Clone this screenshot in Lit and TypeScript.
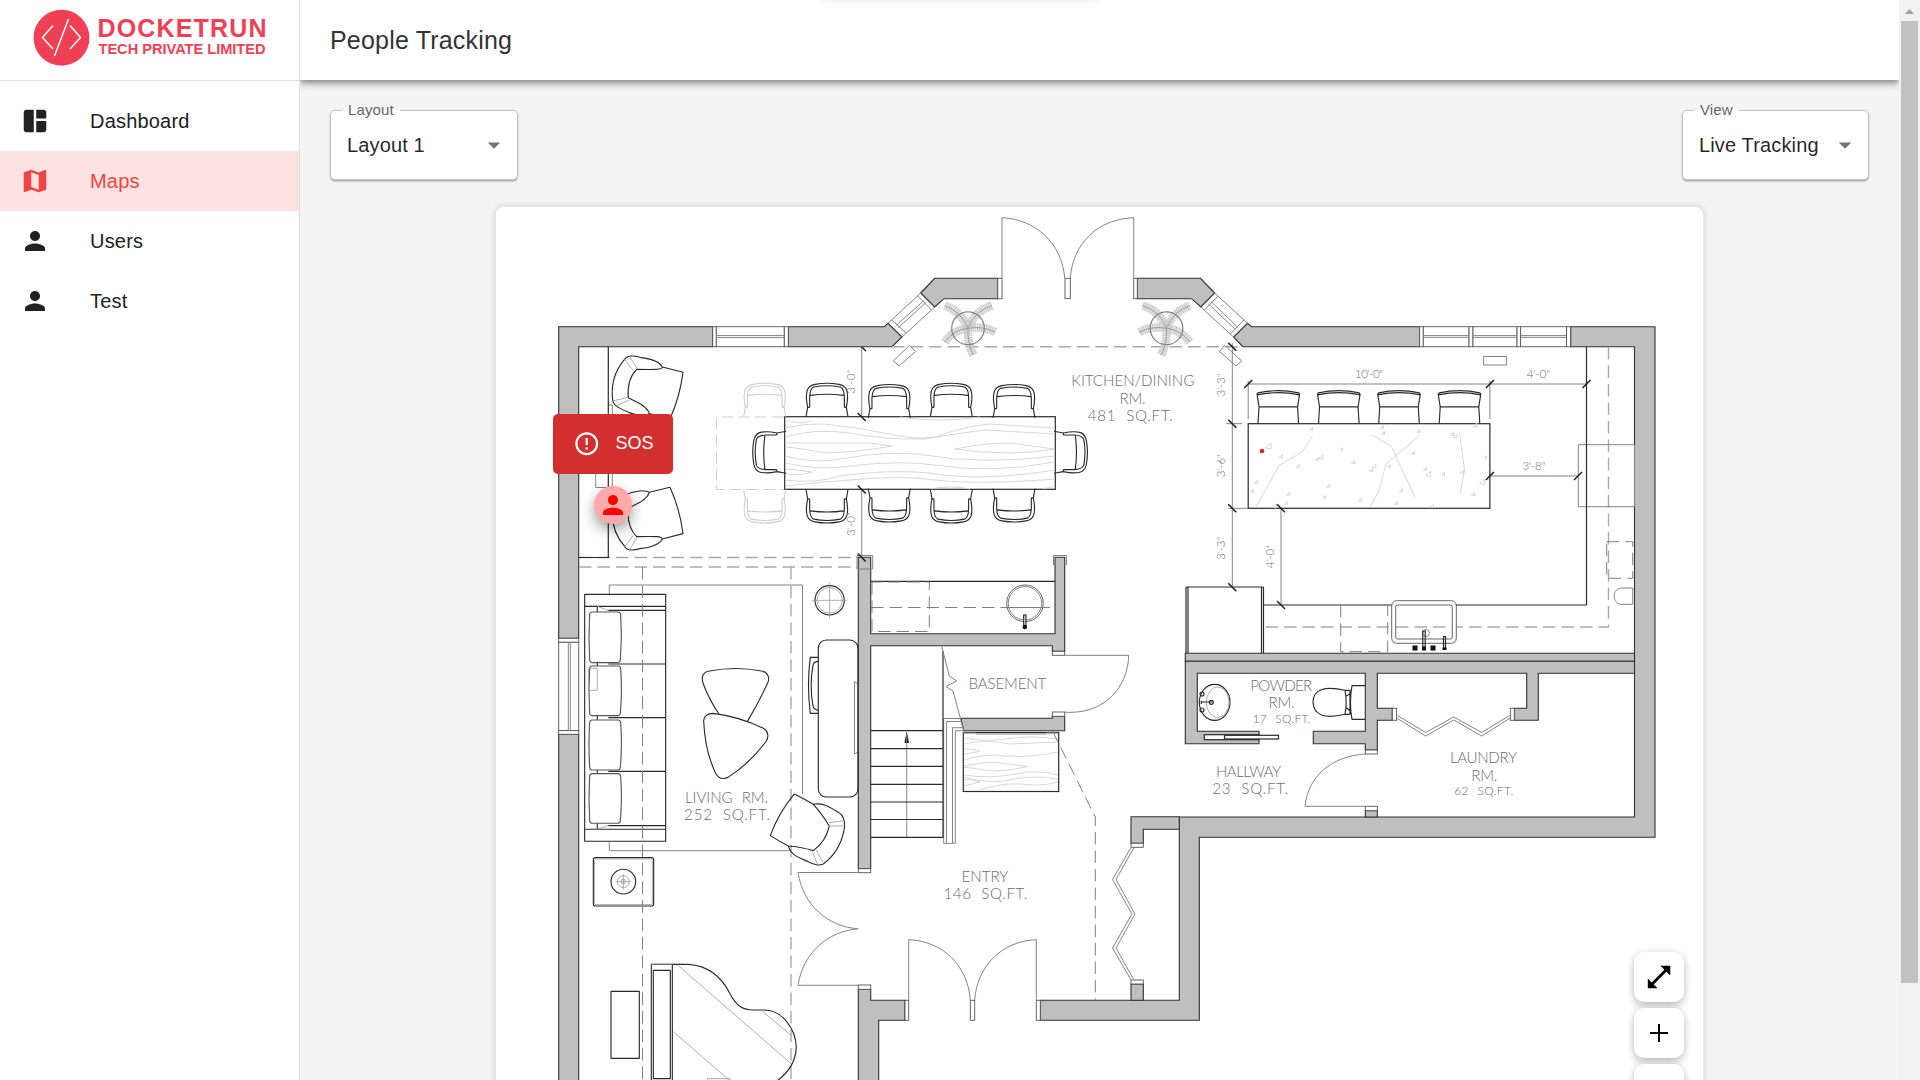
import { LitElement, html, svg, css } from "lit";
import { customElement, property } from "lit/decorators.js";

const ICONS = {
  dashboard:
    "M11 21H5c-1.1 0-2-.9-2-2V5c0-1.1.9-2 2-2h6v18zm2 0h6c1.1 0 2-.9 2-2v-7h-8v9zm8-11V5c0-1.1-.9-2-2-2h-6v7h8z",
  map: "m20.5 3-.16.03L15 5.1 9 3 3.36 4.9c-.21.07-.36.25-.36.48V20.5c0 .28.22.5.5.5l.16-.03L9 18.9l6 2.1 5.64-1.9c.21-.07.36-.25.36-.48V3.5c0-.28-.22-.5-.5-.5zM15 19l-6-2.11V5l6 2.11V19z",
  person:
    "M12 12c2.21 0 4-1.79 4-4s-1.79-4-4-4-4 1.79-4 4 1.79 4 4 4zm0 2c-2.67 0-8 1.34-8 4v2h16v-2c0-2.66-5.33-4-8-4z",
  error:
    "M11 15h2v2h-2zm0-8h2v6h-2zm.99-5C6.47 2 2 6.48 2 12s4.47 10 9.99 10C17.52 22 22 17.52 22 12S17.52 2 11.99 2zM12 20c-4.42 0-8-3.58-8-8s3.58-8 8-8 8 3.58 8 8-3.58 8-8 8z",
  drop: "M7 10l5 5 5-5z",
};

const icon = (name: keyof typeof ICONS) =>
  html`<svg class="icon" viewBox="0 0 24 24"><path d=${ICONS[name]} /></svg>`;

/* ---------- Floor plan data, in page units ---------- */

const WALLS = [
  "M712.7 326.7H558.7V638.3H578.7V346.7H712.7Z",
  "M558.7 734.3H578.7V1090H558.7Z",
  "M788.3 326.7H884.3L888 323.3 902 337 892 346.7H788.3Z",
  "M920.7 293L934.7 278.3H997.7V298.7H944L934.7 307Z",
  "M1137.3 278.3H1200.5L1214.7 293 1200.8 307 1191.7 298.7H1137.3Z",
  "M1251.6 326.7H1419.6V346.7H1242.8L1233.6 337 1247.5 323.3Z",
  "M1570.7 326.7H1655V837.3H1199.3V1020.3H1040.3V1000.3H1179.3V817H1634.5V346.7H1570.7Z",
  "M1185.3 653.3H1634.5V661.3H1185.3Z",
  "M1185.3 661.3H1634.5V673.3H1538.3V720.3H1514.3V708.3H1526.7V673.3H1377.3V708.3H1392.3V720.3H1377.3V750H1365.3V743.7H1313.3V731.3H1365.3V673.3H1197.3V731.3H1259V743.7H1185.3Z",
  "M1365.3 810.7H1377.3V817H1365.3Z",
  "M858.3 557.3H870.7V633.7H1055V557.3H1064.7V651.3H1052.3V645.7H870.7V868.7H858.3Z",
  "M961 718.3H1052.3V716.3H1064.7V730.7H963.7Z",
  "M858.3 989.3H870.7V1000.3H905V1020.3H878.7V1090H858.3Z",
  "M1131 816.7H1179.3V829.3H1143.3V843.3H1131Z",
  "M1131 984H1143.3V1000.3H1131Z",
];

const WHITE_BOXES: [number, number, number, number][] = [
  [712.7, 326.7, 3.6, 20], [716.3, 326.7, 68, 20], [784.3, 326.7, 4, 20],
  [997.7, 278.3, 4.3, 20.4], [1065, 278.3, 5.3, 20.4], [1133.7, 278.3, 3.6, 20.4],
  [1419.6, 326.7, 3.7, 20], [1423.3, 326.7, 45.7, 20], [1469, 326.7, 4, 20],
  [1473, 326.7, 44, 20], [1517, 326.7, 3.6, 20], [1520.6, 326.7, 46, 20], [1566.6, 326.7, 4, 20],
  [558.7, 638.3, 20, 4], [558.7, 642.3, 20, 88.3], [558.7, 730.6, 20, 3.7],
  [1052.3, 651.3, 12.4, 4], [1052.3, 712, 12.4, 4.3],
  [1365.3, 750, 12, 4], [1365.3, 806.3, 12, 4.4],
  [1392.3, 708.3, 4.3, 12], [1510.3, 708.3, 4, 12],
  [858.3, 868.7, 12.4, 4], [858.3, 985, 12.4, 4.3], [905, 1000.3, 3.7, 20],
  [970.3, 1000.3, 4.4, 20], [1036.3, 1000.3, 4, 20],
  [1131, 843.3, 12.3, 4], [1131, 980, 12.3, 4],
];

const THIN = [
  "M716 335.6H784M716 337.6H784M1423 335.6H1469M1423 337.4H1469M1473 335.6H1517M1473 337.4H1517M1521 335.6H1566M1521 337.4H1566",
  "M568.3 642.5V730.5M570.3 642.5V730.5",
  "M888 323.3L920.7 293M902 337L934.7 307M892 320L906 333M917.5 296L931.5 310M895.5 326L924.5 300M898 328L926.5 302",
  "M1214.7 293L1247.5 323.3M1200.8 307L1233.6 337M1218.2 296L1204.3 310M1244 320L1230.2 334M1211 301.5L1237.5 327M1208.5 304L1235 329",
  "M1002 278V217.7C1035 219 1062 243 1064.7 278M1070.3 278C1073 243 1098 219 1133.7 217.7V278",
  "M1064.7 655.3H1128.7C1128 687 1105 712.3 1071 712.3H1064.7",
  "M1365.3 754C1332 756 1308 776 1305 806.3H1365.3",
  "M858.3 872.5H798C803 905 828 927 858.3 928.8C828 931 803 953 798 985.3H858.3",
  "M908.7 1000V939.7C943 941 968 966 970.3 1000M974.7 1000C977 966 1002 941 1036.3 939.7V1000",
  "M1396.6 718L1425.7 736 1453.7 720 1481.7 736 1510.3 718M1397.5 715.5L1425.7 732.5 1453.7 717 1481.7 732.5 1509.5 715.5",
  "M1131 847.5L1112.5 879.5 1132 914 1112.5 948 1131 980M1134 847.5L1116 879.5 1135 914 1116 948 1134 980",
  "M893.3 361L909.5 345.3 915.5 351.5 899 366ZM1224.7 345.3L1219.5 351.5 1236 366 1241.7 361ZM1483.5 356.5H1506.5V365H1483.5Z",
  "M608 405H612.3V487.5H595.7V474",
  "M1578.3 444.7H1634.5V506.7H1578.3Z",
  "M1632.7 588H1622C1611.5 588 1611.5 604.3 1622 604.3H1632.7Z",
  "M609.3 594V585H802.5V794M609.3 842V850.7H790",
  "M854.5 681.5L858 684V752L854.5 754Z",
  "M857 555.5H872.7V569H857ZM1053.5 555.5H1066.5V565M1053.5 555.5V565",
  "M943.7 718.5H961M943.7 718.5V843.3H955.3V730.7H963M946.5 843V721.5H961M952.5 843V727.7H962",
  "M906.7 837V734",
];

const BOLD = [
  "M608.3 347V557.5H579",
  "M870.7 581.3H1055",
  "M870.7 730.7H943M870.7 748.7H943M870.7 766.3H943M870.7 784.3H943M870.7 802H943M870.7 819.5H943M870.7 837.3H943V651",
  "M1586.5 347V605H1456M1391.7 605H1264",
];

const DASHES = [
  "M892 346.7H1243", "M579 557.5H857M579 567H857",
  "M791 567V1080", "M1608.5 347V627H1264",
];
const THIN_DASHES = [
  "M642.5 567V1080", "M871 607.5H1055", "M872 582V631.5H929.3V582H872",
  "M1340.7 605V651.7H1387.7V605", "M1606.7 541.7H1632.7V578.3H1606.7Z",
  "M1052.5 731L1095.3 817V1000",
];

const DIM_LINES =
  "M861.7 347V417M861.7 489V558M1232.3 343V587M1226 423.7H1242M1228 508.3H1248M1281 508.3V605M1248.2 384H1586.5M1248.2 381V419M1489.9 381V419M1489.9 476H1578";
const BACK_TICKS = [[861.7, 417], [861.7, 489.5], [861.7, 557.5], [1232.3, 346.7], [1232.3, 423.7], [1232.3, 508.3], [1232.3, 587.3], [1281, 508.3], [1281, 605]];
const FORWARD_TICKS = [[1248.2, 384], [1489.9, 384], [1586.5, 384], [1489.9, 476], [1578, 476]];

interface Label { x: number; y: number; w: number; size: number; text: string; turned?: boolean }
const L = (x: number, y: number, w: number, text: string, size = 15.2, turned = false): Label => ({ x, y, w, size, text, turned });
const LABELS: Label[] = [
  L(1132.8, 385.8, 123, "KITCHEN/DINING"), L(1132.5, 404.3, 26, "RM."), L(1130.3, 421, 85, "481 SQ.FT."),
  L(1281.2, 691, 62, "POWDER"), L(1281.5, 708, 26, "RM."), L(1281.5, 723.3, 58, "17 SQ.FT.", 12),
  L(1248.5, 776.7, 65, "HALLWAY"), L(1250.2, 794, 76, "23 SQ.FT."),
  L(1483.5, 763.3, 67, "LAUNDRY"), L(1484.3, 780.7, 26, "RM."), L(1483.7, 795.3, 59, "62 SQ.FT.", 12),
  L(726.5, 802.8, 83, "LIVING RM."), L(727, 819.8, 86, "252 SQ.FT."),
  L(1007.4, 688.7, 78, "BASEMENT"), L(984.9, 882, 47, "ENTRY"), L(985.4, 899, 84, "146 SQ.FT."),
  L(1369, 377.8, 28, "10'-0\"", 11.5), L(1538.4, 377.8, 23.5, "4'-0\"", 11.5), L(1534, 469.8, 23, "3'-8\"", 11.5),
  L(1225.2, 385, 23, "3'-3\"", 11.5, true), L(1225.2, 465.7, 23, "3'-6\"", 11.5, true),
  L(1225.3, 548.3, 23, "3'-3\"", 11.5, true), L(1274, 556.7, 23, "4'-0\"", 11.5, true),
  L(855.3, 381.7, 24, "3'-0\"", 11.5, true), L(855.3, 524, 24, "3'-0\"", 11.5, true),
];

/* Furniture symbols are drawn at three times page size and placed with a scale of 1/3. */
const DINING_CHAIR = svg`<path d="M-63 0L-58 -28M63 0L58 -28M-52 -28H-58Q-65 -60 -59 -80Q-53 -94 -36 -97Q0 -104 36 -97Q53 -94 59 -80Q65 -60 58 -28H52M-52 -28V-60Q-51 -84 -40 -89Q0 -97 40 -89Q51 -84 52 -60V-28M-50 -64Q0 -71 50 -64"/>`;
const STOOL = svg`<path d="M-60 0L-57 -50H57L60 0M-57 -50L-63 -88L-60 -92Q0 -105 60 -92L63 -88L57 -50M-63 -86Q0 -99 63 -86"/>`;

const CHAIRS: [number, number, number, boolean][] = [
  [827, 416.7, 0, false], [889.3, 418, 0, false], [951.3, 416.7, 0, false], [1014, 418, 0, false],
  [827, 489.5, 180, false], [889.3, 488.5, 180, false], [951.3, 489.5, 180, false], [1014, 488.5, 180, false],
  [786.2, 452.3, -90, false], [1054, 452.3, 90, false],
  [764.7, 416.7, 0, true], [764.7, 489.5, 180, true],
];

const FRONDS = "M0 0Q-20 -50 -70 -68M0 0Q20 -52 72 -68M0 0Q-45 5 -70 42M0 0Q45 -8 82 12M0 0Q-2 45 16 80";

const GRANITE_CHIPS: [number, number, number][] = [
  [1268, 446, 6], [1311, 429, 3], [1281, 456, 3], [1298, 466, 3], [1321, 457, 4], [1317, 459, 3], [1341, 449, 3],
  [1353, 462, 3], [1374, 466, 4], [1371, 470, 3], [1389, 466, 3], [1383, 433, 3], [1382, 427, 3], [1418, 431, 3],
  [1455, 436, 4], [1452, 434, 3], [1413, 453, 3], [1425, 469, 3], [1428, 474, 5], [1443, 474, 3], [1462, 472, 3],
  [1485, 457, 3], [1482, 482, 5], [1473, 494, 3], [1401, 490, 3], [1396, 503, 3], [1360, 500, 3], [1324, 497, 3],
  [1328, 486, 3], [1288, 494, 3], [1256, 482, 3], [1252, 491, 3], [1274, 506, 4], [1286, 503, 3], [1432, 506, 3], [1475, 425, 4],
];

@customElement("floor-plan")
export class FloorPlan extends LitElement {
  static styles = css`
    :host { display: block; }
    .plan { display: block; width: 100%; height: 100%; }
    .wall { fill: #bfbfbf; stroke: #303030; stroke-width: 1.1; }
    .box { fill: #fff; stroke: #555; stroke-width: 0.9; }
    .thin { fill: none; stroke: #848484; stroke-width: 1; }
    .bold { fill: none; stroke: #2a2a2a; stroke-width: 1.2; }
    .solid { fill: #fff; stroke: #2a2a2a; stroke-width: 1.2; }
    .dash { fill: none; stroke: #a9a9a9; stroke-width: 1.4; stroke-dasharray: 12.5 6; }
    .thin-dash { fill: none; stroke: #808080; stroke-width: 1; stroke-dasharray: 12.5 6; }
    .ghost-dash { fill: none; stroke: #d0d0d0; stroke-width: 1; stroke-dasharray: 12 5; }
    .tick { stroke: #1c1c1c; stroke-width: 1.5; }
    .furniture { fill: none; stroke: #2a2a2a; stroke-width: 3.4; stroke-linejoin: round; }
    .ghost { stroke: #cfcfcf; }
    .fold { stroke: #999; stroke-width: 2.4; }
    .grain { fill: none; stroke: #d2d2d2; stroke-width: 0.9; }
    .frond { fill: none; stroke: #cdcdcd; stroke-width: 26; stroke-dasharray: 5 1.5; }
    .stem { fill: none; stroke: #a0a0a0; stroke-width: 3; }
    .rim { fill: none; stroke: #858585; stroke-width: 3.6; }
    .label {
      fill: #6c6c6c; font-family: Lato, "Open Sans", sans-serif; font-weight: 300; text-anchor: middle; word-spacing: 5px;
    }
    .beacon { fill: #ed1c24; }
    .arrow { fill: #111; }
  `;

  private furniture() {
    return svg`
      <g class="furniture" transform="translate(540 300) scale(.3333)">
        ${["", "translate(0 918) scale(1 -1)"].map((t) => svg`
          <g transform=${t}>
            <path d="M390 356Q420 290 429 217L367 201C366 209 352 209 290 208C270 228 262 260 265 293L303 313Q325 328 328 341L390 356M367 201C360 186 340 177 300 172C275 165 262 166 255 177C222 215 213 260 218 300C220 318 240 326 268 338Q310 352 328 341"/>
            <path class="fold" d="M254 178L280 212M270 170L292 207M219 303L264 292M229 318L268 300"/>
          </g>`)}
      </g>
      <g class="furniture" transform="translate(540 550) scale(.3333)">
        <path d="M134 133H377V874H134ZM134 169H377M134 838H377M172 169V838M205 181H377M205 827H377M205 342H377M205 503H377M205 664H377"/>
        <path class="fold" d="M172 169L205 181M172 838L205 827"/>
        <g fill="#fff" stroke="#555">
          <path d="M156 186H234Q241 186 242 194Q247 262 241 330Q240 338 233 338H157Q150 338 149 330Q145 262 149 192Q150 186 156 186Z"/>
          <path d="M156 348H234Q241 348 242 356Q247 422 241 489Q240 497 233 497H157Q150 497 149 489Q145 422 149 354Q150 348 156 348Z"/>
          <path d="M156 510H234Q241 510 242 518Q247 586 241 652Q240 660 233 660H157Q150 660 149 652Q145 586 149 516Q150 510 156 510Z"/>
          <path d="M156 671H234Q241 671 242 679Q247 746 241 812Q240 820 233 820H157Q150 820 149 812Q145 746 149 677Q150 671 156 671Z"/>
        </g>
        <path class="fold" d="M145 355H172V421H145Z"/>
        <path d="M537 492Q508 450 490 402C482 380 490 366 508 363Q587 348 665 363C683 366 690 382 684 397Q655 460 622 515"/>
        <path d="M520 490Q600 500 670 535C685 543 687 560 679 573Q630 640 567 680C550 690 537 686 528 672Q495 605 491 512Q493 491 520 490Z"/>
        <rect x="835" y="270" width="119" height="471" rx="24"/>
        <path d="M835 322H811Q800 405 811 490H835M835 334Q822 334 819 346Q808 405 819 468Q822 480 835 481"/>
        <circle cx="869" cy="151" r="44"/><circle class="fold" cx="869" cy="151" r="38"/><path class="fold" d="M816 151H922M869 98V204"/>
        <path d="M763 732Q715 790 691 857Q720 875 745 888Q780 890 820 902Q858 875 868 828Q845 790 820 763Q790 745 763 732M820 763C850 757 870 772 895 787C918 800 915 830 912 842C903 885 880 920 850 942C835 948 825 945 805 935C775 922 752 915 745 888"/>
        <path class="fold" d="M867 818L913 812M868 829L914 827M817 905L833 943M828 900L849 938"/>
        <rect x="160" y="923" width="181" height="145" rx="6"/><rect class="fold" x="164" y="927" width="173" height="137" rx="4"/>
        <circle cx="250" cy="995" r="37"/><circle class="fold" cx="250" cy="995" r="18"/><circle class="fold" cx="250" cy="995" r="7"/><path class="fold" d="M227 995H273M250 972V1018"/>
      </g>
      <g class="furniture" transform="translate(540 840) scale(.3333)">
        <path d="M213 454H298V655H213ZM334 740V373H445C520 378 555 430 571 463C590 500 610 510 640 510H673C725 510 768 565 769 623Q765 690 700 730M340 391H391V716H340ZM397 373V740"/>
        <path class="fold" d="M334 373H397M502 740V716H571V740"/>
        <path class="fold ghost" d="M413 375L753 671M400 575L575 727M667 513L755 588"/>
      </g>`;
  }

  private kitchen() {
    return svg`
      <rect class="solid" x="784.7" y="416.7" width="270.6" height="72.6"/>
      <path class="grain" d="M785 420Q800 425 812 421M785 428Q805 423 824 424Q860 428 890 434Q912 440 935 437Q965 426 990 424L1055 428M785 437Q815 428 850 433Q885 440 925 439Q960 433 985 430L1055 434M785 443H870L892 446Q860 452 825 453Q800 448 785 447M955 449Q985 443 1010 443L1055 449Q1010 457 955 449M785 456Q815 464 840 459Q890 450 925 455Q980 465 1055 456M785 463Q820 471 850 466Q900 460 935 465Q990 474 1055 462M785 469Q800 470 812 472Q800 476 785 474M785 480Q815 484 840 476Q890 469 930 473Q980 482 1055 470M785 486Q820 482 850 480Q900 475 935 480Q980 485 1055 479M930 489Q950 485 970 489M1043 489L1055 486M900 417Q940 423 980 417"/>
      ${CHAIRS.map(([x, y, r, ghost]) => svg`<g class="furniture ${ghost ? "ghost" : ""}" transform="translate(${x} ${y}) rotate(${r}) scale(.3333)">${DINING_CHAIR}</g>`)}
      <path class="ghost-dash" d="M784 417H716.5V489.5H784"/>
      <rect class="solid" x="1248.2" y="423.7" width="241.7" height="84.6"/>
      <path class="grain" d="M1312.5 436L1302 452 1279 465.5 1256 507M1371 434.5L1391 446 1415 497M1419 436L1386 464 1379 491 1370 507M1459.5 433L1464.5 470 1460 494"/>
      ${GRANITE_CHIPS.map(([x, y, s]) => svg`<path class="grain" d="M${x - s / 2} ${y + s / 3}L${x + s / 2} ${y - s / 2}V${y + s / 2}Z"/>`)}
      ${[1278.3, 1338.8, 1399, 1459.5].map((x) => svg`<g class="furniture" transform="translate(${x} 423.5) scale(.338 .3333)">${STOOL}</g>`)}
      ${[[968, 328.3], [1166.5, 328.3]].map(([x, y], i) => svg`
        <g transform="translate(${x} ${y}) scale(${i ? -0.3333 : 0.3333} .3333)">
          <path class="frond" d=${FRONDS}/><path class="stem" d=${FRONDS}/><circle class="rim" r="49"/>
        </g>`)}
      <path class="bold" d="M1186 653V587M1263.5 587V653M1188 587V653M1261.5 587V653"/>
      <path class="bold" d="M1186 587H1263.5"/>
      <rect class="box" x="1391.7" y="600.7" width="64.6" height="42.6" rx="5"/>
      <rect class="box" x="1395.7" y="605" width="56.6" height="34" rx="2"/>
      <path class="thin-dash" d="M1396 627H1452"/>
      <circle class="thin" cx="1426" cy="633" r="3.5"/>
      <path class="bold" d="M1422.8 631H1425.2V649H1422.8ZM1443.5 636.5H1445.5V649H1443.5Z"/>
      <path class="arrow" d="M1412.5 645.5H1417.5V650.5H1412.5ZM1422 646.5H1426V650.5H1422ZM1430.5 645.5H1435.5V650.5H1430.5ZM1442.5 647.5H1446.5V650H1442.5Z"/>
      <circle class="box" cx="1025" cy="603.3" r="18.3"/><circle class="thin" cx="1025" cy="603.3" r="16.7"/>
      <path class="thin-dash" d="M1009 607.5H1041"/>
      <rect class="solid" x="1023.7" y="615" width="2.2" height="12"/><circle class="arrow" cx="1024.8" cy="627" r="2.3"/>
      <path class="arrow" d="M906.7 731L909 743H904.5Z"/>
      <rect class="solid" x="963.3" y="732.5" width="95.4" height="59"/>
      <path class="grain" d="M964 738Q985 742 1005 739Q1030 735 1058 739M964 744Q985 739 1010 744L1058 742M964 749Q975 749 980 751.5L964 754M964 760Q985 753 1005 756Q1030 758 1058 752M964 766Q980 763 992 762L1028 766.5Q1010 771 992 771L964 767M964 775Q990 779 1015 774Q1035 769 1058 775M964 779Q975 780 980 782L964 786M980 790Q1000 783 1020 784Q1040 787 1058 782M964 777Q990 785 1015 779Q1035 775 1058 779"/>
      <path class="thin" d="M976 734H1046M963 733H976M1046 733H1058"/>`;
  }

  private powderRoom() {
    return svg`
      <g class="furniture" transform="translate(1160 500) scale(.3333)">
        <ellipse cx="164" cy="607" rx="46" ry="54"/><ellipse class="fold" cx="173" cy="607" rx="34" ry="46"/>
        <path d="M122 606H158M124 602V612"/><circle cx="126" cy="582" r="6"/><circle cx="126" cy="630" r="6"/><circle cx="154" cy="607" r="6"/>
        <path d="M555 571Q460 550 459 607Q462 665 555 643Q562 607 555 571ZM616 557H576Q567 607 576 658H616M555 571H570V643H555M557 590L572 580M557 622L572 634"/>
      </g>
      <rect class="solid" x="1204.3" y="734.7" width="54.7" height="5"/>
      <rect class="solid" x="1224.5" y="735.3" width="54" height="3.7"/>`;
  }

  render() {
    return html`
      <svg class="plan" viewBox="496 207 1207 873" preserveAspectRatio="xMinYMin slice">
        ${WALLS.map((d) => svg`<path class="wall" d=${d}/>`)}
        ${WHITE_BOXES.map(([x, y, w, h]) => svg`<rect class="box" x=${x} y=${y} width=${w} height=${h}/>`)}
        ${DASHES.map((d) => svg`<path class="dash" d=${d}/>`)}
        ${this.kitchen()}
        ${THIN.map((d) => svg`<path class="thin" d=${d}/>`)}
        ${BOLD.map((d) => svg`<path class="bold" d=${d}/>`)}
        ${this.furniture()}
        ${this.powderRoom()}
        ${THIN_DASHES.map((d) => svg`<path class="thin-dash" d=${d}/>`)}
        <path class="thin" stroke="#555" d="M941.5 645.7L949.3 676 956.7 681 946 686.5 953 691 963.7 730.7"/>
        <path class="thin" d=${DIM_LINES}/>
        <path class="tick" d="M861.7 347L866 351"/>
        ${BACK_TICKS.map(([x, y]) => svg`<path class="tick" d="M${x - 4} ${y - 4}L${x + 4} ${y + 4}"/>`)}
        ${FORWARD_TICKS.map(([x, y]) => svg`<path class="tick" d="M${x - 4} ${y + 4}L${x + 4} ${y - 4}"/>`)}
        ${LABELS.map((l) => svg`<text class="label" x=${l.x} y=${l.y} font-size=${l.size} textLength=${l.w}
          transform=${l.turned ? `rotate(-90 ${l.x} ${l.y})` : ""}>${l.text}</text>`)}
        <circle class="beacon" cx="1262" cy="451" r="2.3"/>
      </svg>`;
  }
}

@customElement("select-field")
export class SelectField extends LitElement {
  @property() label = "";
  @property() value = "";

  static styles = css`
    :host { display: block; height: 70px; }
    .field {
      box-sizing: border-box; height: 70px; padding: 0 8px 0 16px; position: relative;
      display: flex; align-items: center; justify-content: space-between;
      border: 1px solid #c4c4c4; border-radius: 5px; background: #fff;
      box-shadow: 0 2px 2px -1px rgba(0, 0, 0, 0.3), 0 1px 3px rgba(0, 0, 0, 0.14);
    }
    .caption {
      position: absolute; left: 11px; top: -10px; padding: 0 6px; font-size: 15px; line-height: 17px;
      letter-spacing: 0.14px; color: #666;
      background: linear-gradient(#f4f4f4 0 9px, #fff 9px);
    }
    .value { font-size: 20px; line-height: 29px; letter-spacing: 0.14px; color: rgba(0, 0, 0, 0.87); }
    .icon { width: 30px; height: 30px; fill: #757575; }
  `;

  render() {
    return html`<div class="field">
      <span class="caption">${this.label}</span>
      <span class="value">${this.value}</span>
      ${icon("drop")}
    </div>`;
  }
}

@customElement("app-root")
export class AppRoot extends LitElement {
  static styles = css`
    :host {
      display: grid; grid-template-columns: 300px 1fr 21px; height: 1080px; overflow: hidden;
      font-family: "Liberation Sans", Arial, sans-serif; background: #f4f4f4; color: #212121;
    }
    .sidebar { border-right: 1px solid #e0e0e0; background: #fff; }
    .brand { box-sizing: border-box; height: 81px; border-bottom: 1px solid #e0e0e0; }
    .logo { display: block; width: 299px; height: 80px; }
    .logo-fill { fill: #ef4056; }
    .logo-stroke { fill: none; stroke: #fff; stroke-width: 1.5; }
    .nav { padding-top: 10px; }
    .item { display: flex; align-items: center; gap: 40px; height: 60px; padding-left: 20px; font-size: 20px; letter-spacing: 0.19px; }
    .item.active { background: #fee2e2; color: #ef4444; }
    .icon { display: block; width: 30px; height: 30px; fill: currentColor; }
    .main { display: flex; flex-direction: column; min-width: 0; }
    .bar {
      display: flex; align-items: center; flex: 0 0 80px; padding-left: 30px; position: relative; background: #fff;
      font-size: 25px; letter-spacing: 0.19px; color: #333;
      box-shadow: 0 3px 5px -1px rgba(0, 0, 0, 0.3), 0 5px 6px rgba(0, 0, 0, 0.14), 0 1px 12px rgba(0, 0, 0, 0.12);
      clip-path: inset(0 0 -20px 0);
    }
    .toast-shadow {
      position: absolute; left: 520px; top: -40px; width: 280px; height: 38px; border-radius: 5px;
      box-shadow: 0 1px 12px rgba(0, 0, 0, 0.12);
    }
    .controls { display: flex; justify-content: space-between; padding: 30px 30px 25px; }
    .layout { width: 188px; }
    .view { width: 187px; }
    .card {
      position: relative; flex: none; width: 1207px; height: 1000px; margin-left: 194px; overflow: hidden;
      border: 2px solid #e5e6eb; border-radius: 10px; background: #fff; box-shadow: 0 0 5px rgba(0, 0, 0, 0.12);
    }
    .map { width: 1207px; height: 873px; }
    .alert {
      position: absolute; left: 57px; top: 207px; box-sizing: border-box; width: 120px; height: 60px; padding-left: 20px;
      display: flex; align-items: center; gap: 15px; border-radius: 5px; background: #d32f2f; color: #fff;
      font-size: 18px; line-height: 22px;
    }
    .alert .icon { width: 27.5px; height: 27.5px; }
    .alert-text { padding-bottom: 2px; }
    .marker {
      position: absolute; left: 98px; top: 279px; width: 38px; height: 38px; display: grid; place-items: center;
      border-radius: 50%; background: #ffaaaa; color: #f00; box-shadow: 0 6px 14px rgba(0, 0, 0, 0.38);
    }
    .tools { position: absolute; left: 1138px; top: 745px; display: flex; flex-direction: column; gap: 6px; }
    .tool {
      width: 50px; height: 50px; display: grid; place-items: center; border-radius: 10px; background: #fff;
      box-shadow: 0 4px 8px rgba(0, 0, 0, 0.22), 0 0 8px rgba(0, 0, 0, 0.08);
    }
    .glyph { width: 24px; height: 24px; fill: #000; }
    .scroll { display: flex; flex-direction: column; align-items: center; background: #f1f1f1; }
    .step { width: 21px; height: 21px; fill: #a3a3a3; }
    .step.down { margin-top: auto; fill: #505050; }
    .thumb { width: 17px; height: 962px; background: #c1c1c1; }
  `;

  private nav: { name: keyof typeof ICONS; text: string }[] = [
    { name: "dashboard", text: "Dashboard" },
    { name: "map", text: "Maps" },
    { name: "person", text: "Users" },
    { name: "person", text: "Test" },
  ];

  render() {
    return html`
      <aside class="sidebar">
        <div class="brand">
          <svg class="logo" viewBox="0 0 299 80">
            <circle class="logo-fill" cx="61.5" cy="37.7" r="28" />
            <path class="logo-stroke" d="M53 25.5L42.5 37.5 53 49M70 25.5L80.5 37.5 70 49M68.5 19L54.5 56" />
            <text class="logo-fill" x="97.5" y="37.3" font-size="25" font-weight="700" textLength="169">DOCKETRUN</text>
            <text class="logo-fill" x="98.5" y="54" font-size="14.5" font-weight="700" textLength="167" lengthAdjust="spacingAndGlyphs">TECH PRIVATE LIMITED</text>
          </svg>
        </div>
        <nav class="nav">
          ${this.nav.map((n) => html`<div class="item ${n.text === "Maps" ? "active" : ""}">${icon(n.name)}<span>${n.text}</span></div>`)}
        </nav>
      </aside>
      <main class="main">
        <header class="bar">People Tracking<div class="toast-shadow"></div></header>
        <div class="controls">
          <select-field class="layout" label="Layout" value="Layout 1"></select-field>
          <select-field class="view" label="View" value="Live Tracking"></select-field>
        </div>
        <section class="card">
          <floor-plan class="map"></floor-plan>
          <div class="alert">${icon("error")}<span class="alert-text">SOS</span></div>
          <div class="marker">${icon("person")}</div>
          <div class="tools">
            <div class="tool"><svg class="glyph" viewBox="0 0 24 24"><path d="M13.5 .8H23.3V10.6L19.4 6.7 6.7 19.4 10.6 23.3H.8V13.5L4.7 17.4 17.4 4.7Z" /></svg></div>
            <div class="tool"><svg class="glyph" viewBox="0 0 24 24"><path d="M11 3H13V11H21V13H13V21H11V13H3V11H11Z" /></svg></div>
            <div class="tool"></div>
          </div>
        </section>
      </main>
      <div class="scroll">
        <svg class="step" viewBox="0 0 21 21"><path d="M6 14L10.5 9 15 14Z" /></svg>
        <div class="thumb"></div>
        <svg class="step down" viewBox="0 0 21 21"><path d="M6 7L10.5 12 15 7Z" /></svg>
      </div>`;
  }
}
